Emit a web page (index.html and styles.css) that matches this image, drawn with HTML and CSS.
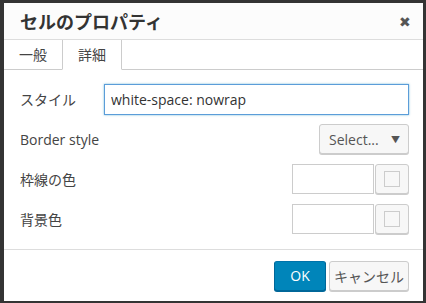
FILE: index.html
```html
<!DOCTYPE html>
<html lang="ja">
<head>
  <meta charset="UTF-8" />
  <title>セルのプロパティ</title>
  <link rel="stylesheet" href="styles.css">
</head>
<body>
  <div class="dialog">
    <div class="dialog-head">
      <h1>セルのプロパティ</h1>
      <span class="close">&#x2716;</span>
    </div>
    <div class="tabs">
      <div class="tab">一般</div>
      <div class="tab active">詳細</div>
      <div class="tab-rest"></div>
    </div>
    <div class="dialog-body">
      <div class="row">
        <label>スタイル</label>
        <input type="text" class="text-input focus" value="white-space: nowrap" />
      </div>
      <div class="row">
        <label>Border style</label>
        <div class="select">Select... <span class="arrow">&#9660;</span></div>
      </div>
      <div class="row">
        <label>枠線の色</label>
        <div class="color-field">
          <input type="text" class="color-input" />
          <div class="swatch"><span></span></div>
        </div>
      </div>
      <div class="row">
        <label>背景色</label>
        <div class="color-field">
          <input type="text" class="color-input" />
          <div class="swatch"><span></span></div>
        </div>
      </div>
    </div>
    <div class="dialog-foot">
      <button class="btn primary">OK</button>
      <button class="btn">キャンセル</button>
    </div>
  </div>
</body>
</html>
```
FILE: styles.css
```css
html, body {
  margin: 0;
  background: #343434;
}
body {
  padding: 3px 3px 2px 4px;
  font-family: "Open Sans", "Noto Sans CJK JP", sans-serif;
  font-size: 14px;
  color: #444;
}
.dialog {
  background: #fff;
  width: 419px;
  height: 298px;
  display: flex;
  flex-direction: column;
}
.dialog-head {
  height: 36px;
  flex-shrink: 0;
  background: #fcfcfc;
  border-bottom: 1px solid #ddd;
  display: flex;
  align-items: center;
  justify-content: space-between;
  padding: 0 12px 0 16px;
}
.dialog-head h1 {
  margin: 0;
  font-size: 18px;
  font-weight: 600;
  color: #333;
}
.close {
  font-size: 14px;
  color: #555;
}
.tabs {
  display: flex;
  height: 30px;
  flex-shrink: 0;
}
.tab {
  width: 58px;
  box-sizing: border-box;
  text-align: center;
  line-height: 29px;
  border-bottom: 1px solid #ccc;
  color: #444;
}
.tab.active {
  width: 60px;
  border-left: 1px solid #ccc;
  border-right: 1px solid #ccc;
  border-bottom-color: transparent;
}
.tab-rest {
  flex: 1;
  border-bottom: 1px solid #ccc;
}
.dialog-body {
  padding: 14px 14px 0 16px;
  display: flex;
  flex-direction: column;
  gap: 10px;
  height: 165px;
  flex-shrink: 0;
  border-bottom: 1px solid #ddd;
}
.row {
  display: flex;
  align-items: center;
  justify-content: space-between;
  height: 30px;
}
.row label {
  color: #444;
}
.text-input {
  width: 305px;
  height: 31px;
  box-sizing: border-box;
  border: 1px solid #ccc;
  padding: 0 6px;
  font: inherit;
  color: #333;
}
.text-input.focus {
  border-color: #5b9dd9;
  box-shadow: 0 0 2px rgba(30, 140, 190, 0.6);
  outline: none;
}
.select {
  width: 90px;
  height: 30px;
  box-sizing: border-box;
  border: 1px solid #ccc;
  border-radius: 3px;
  background: #f7f7f7;
  box-shadow: 0 1px 0 #ccc;
  display: flex;
  align-items: center;
  justify-content: space-between;
  padding: 0 8px 0 9px;
  color: #555;
}
.arrow {
  font-size: 9px;
  color: #555;
}
.color-field {
  display: flex;
  gap: 1px;
}
.color-input {
  width: 82px;
  height: 30px;
  box-sizing: border-box;
  border: 1px solid #ccc;
  font: inherit;
}
.swatch {
  width: 34px;
  height: 30px;
  box-sizing: border-box;
  border: 1px solid #ccc;
  border-radius: 3px;
  background: #f7f7f7;
  box-shadow: 0 1px 0 #ccc;
  display: flex;
  align-items: center;
  justify-content: center;
}
.swatch span {
  width: 14px;
  height: 14px;
  border: 1px solid #ccc;
}
.dialog-foot {
  flex: 1;
  display: flex;
  align-items: center;
  justify-content: flex-end;
  gap: 3px;
  padding: 0 14px 0 0;
}
.btn {
  height: 30px;
  padding: 0 4px;
  border: 1px solid #ccc;
  border-radius: 3px;
  background: #f7f7f7;
  box-shadow: 0 1px 0 #ccc;
  font: inherit;
  color: #555;
}
.btn.primary {
  width: 52px;
  background: #0085ba;
  border-color: #0073aa #006799 #006799;
  box-shadow: 0 1px 0 #006799;
  color: #fff;
}
```
